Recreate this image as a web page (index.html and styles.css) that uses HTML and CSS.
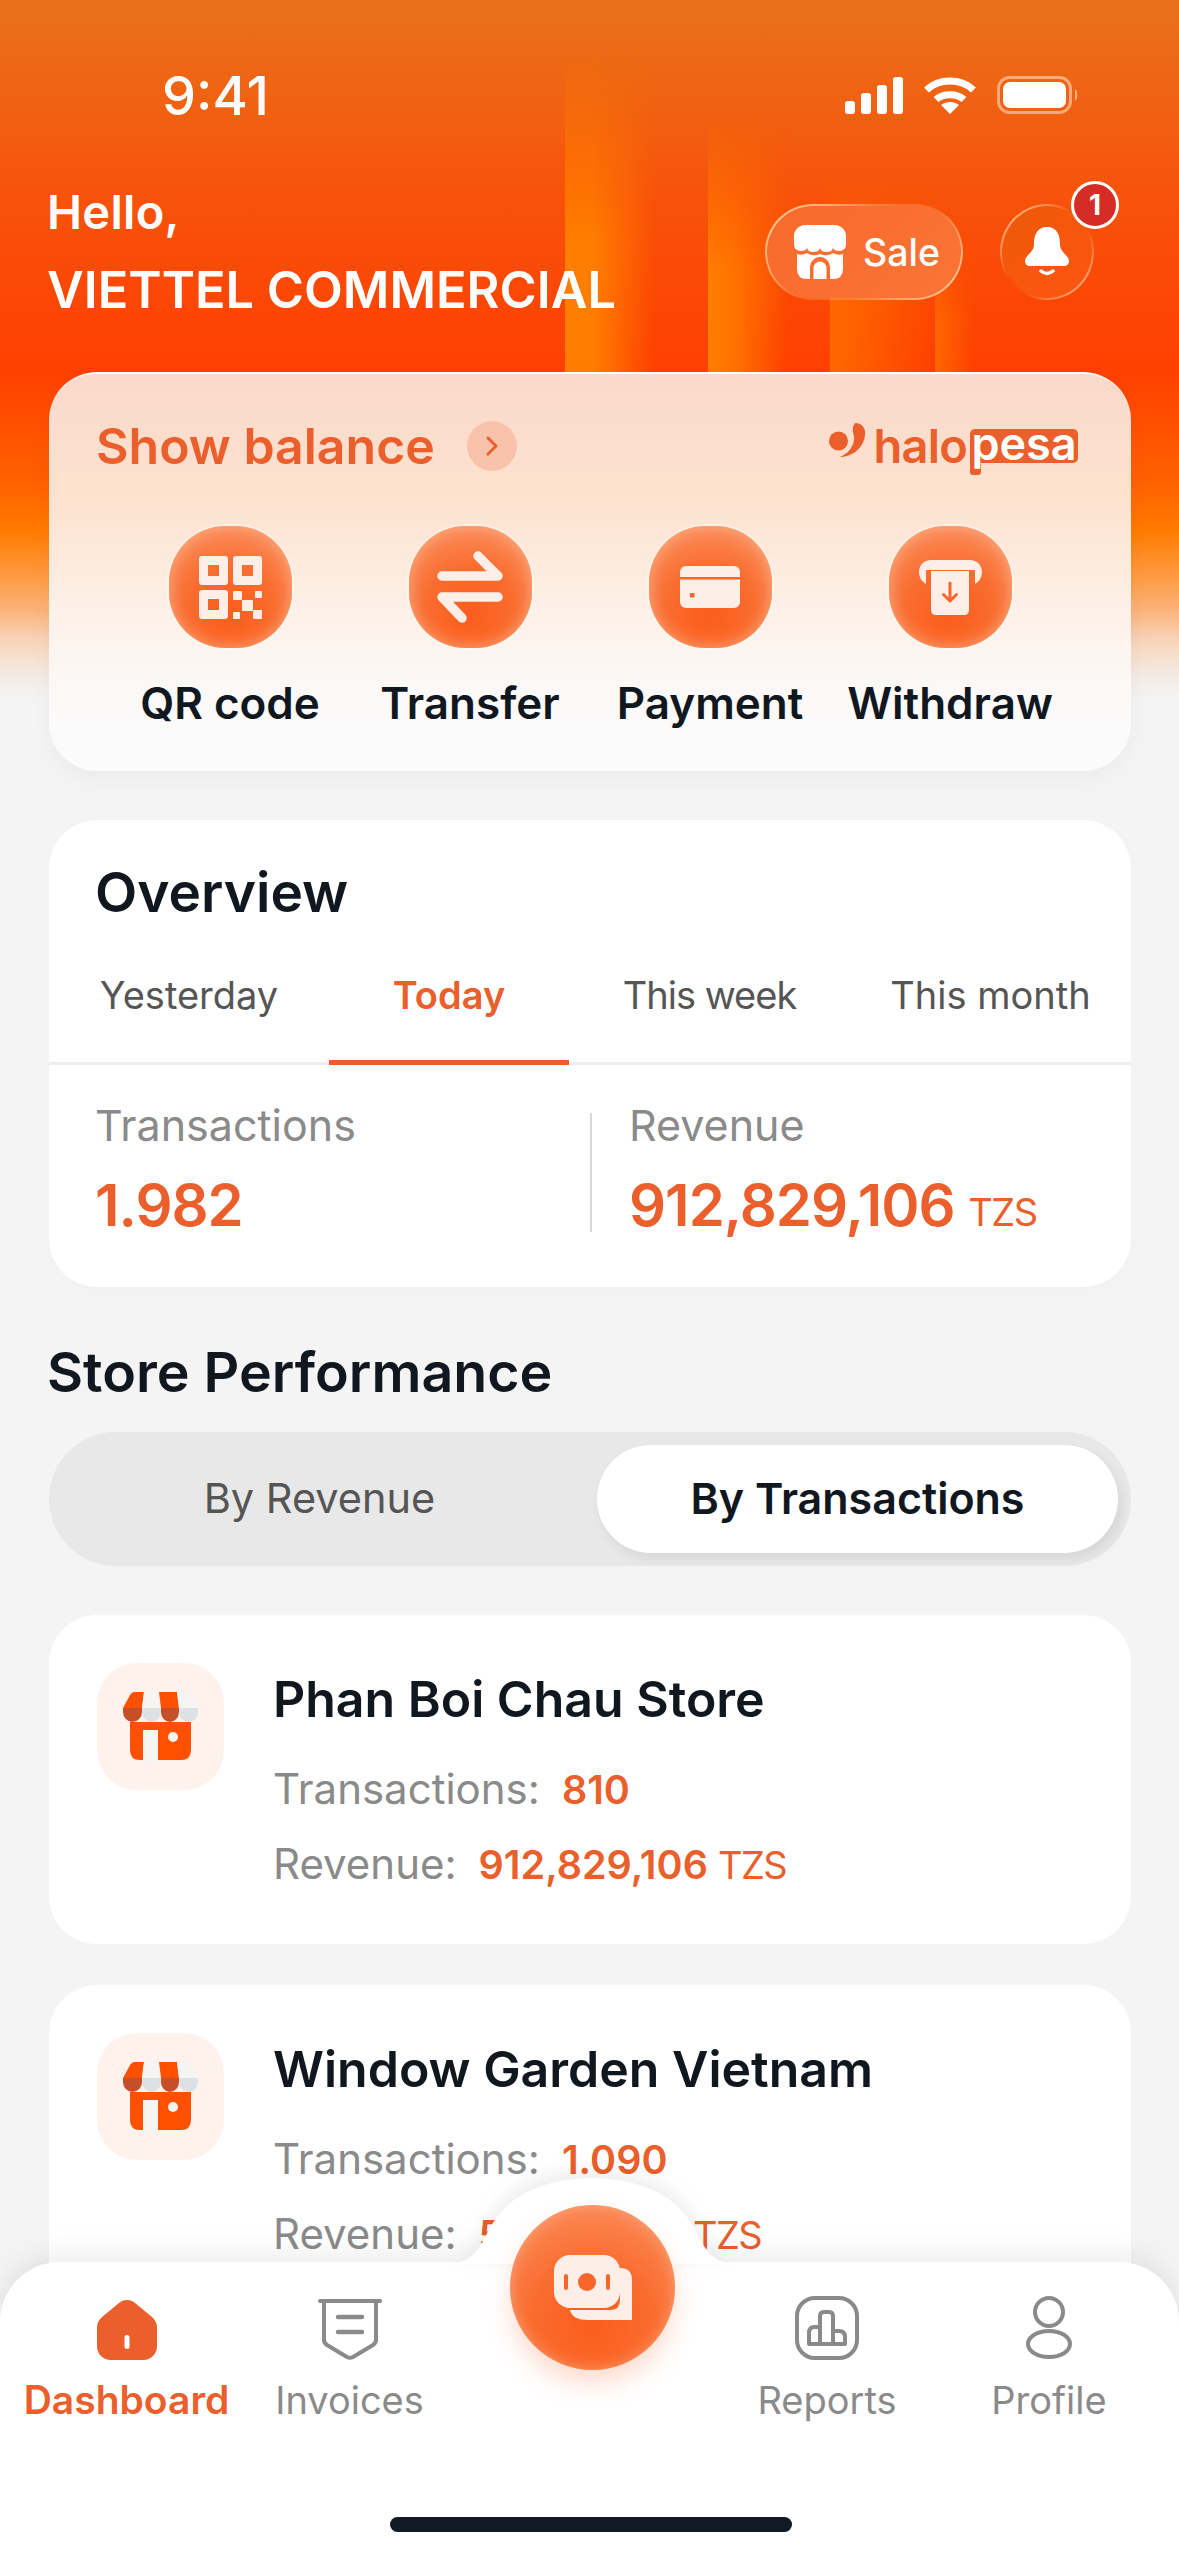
FILE: index.html
```html
<!DOCTYPE html>
<html lang="en">
<head>
    <meta charset="UTF-8">
    <meta name="viewport" content="width=device-width, initial-scale=1.0">
    <title>Dashboard</title>
    <link rel="stylesheet" href="styles.css">
</head>
<body>
    <div id="screen">
        <!-- orange backdrop behind the header -->
        <div class="backdrop">
            <div class="stripe stripeA"></div>
            <div class="stripe stripeB"></div>
            <div class="stripe stripeC"></div>
            <div class="stripe stripeD"></div>
        </div>

        <div class="content">
            <div class="statusBar">
                <span class="clock">9:41</span>
                <div class="statusIcons">
                    <svg width="58" height="37" viewBox="0 0 58 37" fill="#fff">
                        <rect x="0" y="24" width="10" height="13" rx="3"/>
                        <rect x="16" y="16" width="10" height="21" rx="3"/>
                        <rect x="32" y="8" width="10" height="29" rx="3"/>
                        <rect x="48" y="0" width="10" height="37" rx="3"/>
                    </svg>
                    <svg width="52" height="37" viewBox="0 0 52 37" fill="none" stroke="#fff" stroke-width="7">
                        <path d="M2.5 13C15 1 37 1 49.500 13"/>
                        <path d="M12 22.500C19 16 33 16 40 22.500"/>
                        <path d="M26 37L17 28C22 24 30 24 35 28Z" fill="#fff" stroke="none"/>
                    </svg>
                    <svg width="82" height="38" viewBox="0 0 82 38" fill="none">
                        <rect x="1.500" y="1.500" width="72" height="35" rx="11" stroke="#fff" stroke-opacity=".45" stroke-width="3"/>
                        <rect x="6" y="6" width="63" height="26" rx="7" fill="#fff"/>
                        <path d="M78 13C81 15 81 23 78 25Z" fill="#fff" fill-opacity=".5"/>
                    </svg>
                </div>
            </div>

            <div class="greetingRow">
                <div>
                    <div class="hello">Hello,</div>
                    <div class="merchant">VIETTEL COMMERCIAL</div>
                </div>
                <div class="headerActions">
                    <div class="salePill">
                        <svg width="52" height="54" viewBox="0 0 52 54" fill="#fff">
                            <path d="M11 0H41C47 0 52 5 52 11V19Q52 26 45 26Q39 26 39 22Q39 27 32.500 27Q26 27 26 22Q26 27 19.500 27Q13 27 13 22Q13 26 7 26Q0 26 0 19V11C0 5 5 0 11 0Z"/>
                            <path d="M3 29Q8 31 13 28Q19 32 26 29Q33 32 39 28Q44 31 49 29V44Q49 54 39 54H36V42A10 10 0 0 0 16 42V54H13Q3 54 3 44Z"/>
                            <path d="M19.500 54V43A6.500 6.500 0 0 1 32.500 43V54Z"/>
                        </svg>
                        <span>Sale</span>
                    </div>
                    <div class="bellButton">
                        <svg width="44" height="50" viewBox="0 0 44 50">
                            <path fill="#fff" d="M22 0C32 0 35 8 35 17C35 26 44 28 44 34C44 37 42 39 39 39H5C2 39 0 37 0 34C0 28 9 26 9 17C9 8 12 0 22 0Z"/>
                            <path fill="none" stroke="#fff" stroke-width="3.500" stroke-linecap="round" d="M16 44Q22 49 28 44"/>
                        </svg>
                        <span class="badge">1</span>
                    </div>
                </div>
            </div>

            <div class="card balanceCard">
                <div class="balanceTop">
                    <div class="showBalance">
                        <span>Show balance</span>
                        <div class="chevron">
                            <svg width="14" height="22" viewBox="0 0 14 22" fill="none" stroke="#ea5f2b" stroke-width="3" stroke-linecap="round" stroke-linejoin="round"><path d="M3 3L11 11L3 19"/></svg>
                        </div>
                    </div>
                    <div class="logo">
                        <svg width="37" height="35" viewBox="0 0 37 35" fill="#ea5f2b">
                            <circle cx="9.500" cy="18" r="9.500"/>
                            <path d="M26 0C33 0 37 5 36 12C35 24 24 34 11 34C18 31 24 25 25 17C26 11 21 7 26 0Z"/>
                        </svg>
                        <span class="logoHalo">halo</span>
                        <span class="logoPesa">pesa</span>
                    </div>
                </div>
                <div class="quickActions">
                    <div class="quickAction">
                        <div class="blob">
                            <svg width="63" height="63" viewBox="0 0 63 63" fill="#fdeee7">
                                <path fill-rule="evenodd" d="M3 0H26A3 3 0 0 1 29 3V26A3 3 0 0 1 26 29H3A3 3 0 0 1 0 26V3A3 3 0 0 1 3 0ZM9 9V20H20V9Z"/>
                                <path fill-rule="evenodd" d="M37 0H60A3 3 0 0 1 63 3V26A3 3 0 0 1 60 29H37A3 3 0 0 1 34 26V3A3 3 0 0 1 37 0ZM43 9V20H54V9Z"/>
                                <path fill-rule="evenodd" d="M3 34H26A3 3 0 0 1 29 37V60A3 3 0 0 1 26 63H3A3 3 0 0 1 0 60V37A3 3 0 0 1 3 34ZM9 43V54H20V43Z"/>
                                <rect x="34" y="35" width="9" height="9" rx="1"/>
                                <rect x="56" y="35" width="7" height="7" rx="1"/>
                                <rect x="43" y="44" width="11" height="11" rx="1"/>
                                <rect x="34" y="56" width="7" height="7" rx="1"/>
                                <rect x="54" y="54" width="9" height="9" rx="1"/>
                            </svg>
                        </div>
                        <div class="quickLabel">QR code</div>
                    </div>
                    <div class="quickAction">
                        <div class="blob">
                            <svg width="66" height="72" viewBox="0 0 66 72" fill="none" stroke="#fdeee7" stroke-width="9.500" stroke-linecap="round" stroke-linejoin="round">
                                <path d="M5 25H61L41 5"/>
                                <path d="M61 46H5L25 67"/>
                            </svg>
                        </div>
                        <div class="quickLabel">Transfer</div>
                    </div>
                    <div class="quickAction">
                        <div class="blob">
                            <svg width="60" height="42" viewBox="0 0 60 42">
                                <rect width="60" height="42" rx="6" fill="#fdeee7"/>
                                <rect y="11" width="60" height="2.500" fill="#f9662a"/>
                                <rect x="10" y="27" width="4.500" height="4.500" fill="#f9662a"/>
                            </svg>
                        </div>
                        <div class="quickLabel">Payment</div>
                    </div>
                    <div class="quickAction">
                        <div class="blob">
                            <svg width="63" height="55" viewBox="0 0 63 55">
                                <path fill="#fdeee7" d="M12 0H51C58 0 63 5 63 12C63 17 60 22 56 24V10H7V24C3 22 0 17 0 12C0 5 5 0 12 0Z"/>
                                <path fill="#fdeee7" d="M12 11H50V50Q50 55 45 55H17Q12 55 12 50Z"/>
                                <path fill="none" stroke="#f9662a" stroke-width="3" stroke-linecap="round" stroke-linejoin="round" d="M31 23V41M24.500 34.500L31 41L37.500 34.500"/>
                            </svg>
                        </div>
                        <div class="quickLabel">Withdraw</div>
                    </div>
                </div>
            </div>

            <div class="card overviewCard">
                <div class="overviewTitle">Overview</div>
                <div class="tabs">
                    <div class="tab">Yesterday</div>
                    <div class="tab tabActive">Today</div>
                    <div class="tab tabWeek">This week</div>
                    <div class="tab">This month</div>
                </div>
                <div class="stats">
                    <div class="stat statLeft">
                        <div class="statLabel">Transactions</div>
                        <div class="statValue">1.982</div>
                    </div>
                    <div class="statDivider"></div>
                    <div class="stat statRight">
                        <div class="statLabel">Revenue</div>
                        <div class="statValue">912,829,106 <span class="unit">TZS</span></div>
                    </div>
                </div>
            </div>

            <div class="sectionTitle">Store Performance</div>
            <div class="segment">
                <div class="segOption">By Revenue</div>
                <div class="segOption segActive">By Transactions</div>
            </div>

            <div class="card storeCard">
                <div class="storeIcon">
                    <svg width="75" height="70" viewBox="0 0 75 70">
                        <use href="#shopGlyph"/>
                    </svg>
                </div>
                <div class="storeInfo">
                    <div class="storeName">Phan Boi Chau Store</div>
                    <div class="storeLine firstLine"><span class="lineLabel">Transactions:</span><b>810</b></div>
                    <div class="storeLine"><span class="lineLabel">Revenue:</span><b>912,829,106</b><span class="lineUnit">TZS</span></div>
                </div>
            </div>

            <div class="card storeCard secondStore">
                <div class="storeIcon">
                    <svg width="75" height="70" viewBox="0 0 75 70">
                        <use href="#shopGlyph"/>
                    </svg>
                </div>
                <div class="storeInfo">
                    <div class="storeName">Window Garden Vietnam</div>
                    <div class="storeLine firstLine"><span class="lineLabel">Transactions:</span><b>1.090</b></div>
                    <div class="storeLine"><span class="lineLabel">Revenue:</span><b>51,829,106</b><span class="lineUnit">TZS</span></div>
                </div>
            </div>
        </div>

        <!-- bottom navigation, sits over the scrolling list -->
        <div class="bottomNav">
            <svg class="navBump" width="286" height="86" viewBox="0 0 286 86" fill="#fff">
                <path d="M0 86C22 84 27 74 33 65C37 57 42 47 48 39C58 26 70 17 83 12C100 4 122 0 143 0C164 0 186 4 203 12C216 17 228 26 238 39C244 47 249 57 253 65C259 74 264 84 286 86Z"/>
            </svg>
            <div class="scanButton">
                <svg width="78" height="65" viewBox="0 0 78 65">
                    <path fill="#fdeee7" d="M34 65Q18 65 16 55H56Q66 55 66 45V13Q78 13 78 25V65Z"/>
                    <rect x="0" y="0" width="66" height="53" rx="16" fill="#fdeee7"/>
                    <circle cx="33" cy="27" r="9" fill="#f9662a"/>
                    <rect x="10" y="19" width="4" height="16" rx="2" fill="#f9662a"/>
                    <rect x="52" y="19" width="4" height="16" rx="2" fill="#f9662a"/>
                </svg>
            </div>
            <div class="navItems">
                <div class="navItem navActive">
                    <svg width="60" height="60" viewBox="0 0 60 60">
                        <path fill="#ea5f2b" d="M22 3C26 -1 34 -1 38 3L55 17C58 20 60 23 60 27V46C60 54 54 60 46 60H14C6 60 0 54 0 46V27C0 23 2 20 5 17Z"/>
                        <rect x="27.500" y="35" width="5" height="14" rx="2.500" fill="#fff"/>
                    </svg>
                    <span>Dashboard</span>
                </div>
                <div class="navItem">
                    <svg width="64" height="62" viewBox="0 0 64 62" fill="none" stroke="#8a8a8a" stroke-width="4" stroke-linecap="round" stroke-linejoin="round">
                        <path d="M2 3H62"/>
                        <path d="M6 3V42Q6 45 9 47L29 59Q32 60.500 35 59L55 47Q58 45 58 42V3"/>
                        <path d="M20 19H44M20 34H44" stroke-width="4.500"/>
                    </svg>
                    <span>Invoices</span>
                </div>
                <div class="navGap"></div>
                <div class="navItem">
                    <svg width="64" height="64" viewBox="0 0 64 64" fill="none" stroke="#8a8a8a" stroke-width="4" stroke-linejoin="round">
                        <rect x="2" y="2" width="60" height="60" rx="18"/>
                        <path d="M14 48V37Q14 31 19.500 31H25V20Q25 16 29 16H34Q38 16 38 20V35H44Q50 35 50 41V48ZM25 31V48M38 35V48"/>
                    </svg>
                    <span>Reports</span>
                </div>
                <div class="navItem">
                    <svg width="46" height="64" viewBox="0 0 46 64" fill="none" stroke="#8a8a8a" stroke-width="4">
                        <circle cx="23" cy="16" r="14"/>
                        <ellipse cx="23" cy="48" rx="21" ry="13"/>
                    </svg>
                    <span>Profile</span>
                </div>
            </div>
            <div class="homeBar"></div>
        </div>

        <svg width="0" height="0" class="defs">
            <defs>
                <g id="shopGlyph">
                    <path fill="#ff5000" d="M7 30H68V58Q68 68 58 68H17Q7 68 7 58Z"/>
                    <rect x="20" y="38" width="15" height="32" fill="#f5f5f3"/>
                    <circle cx="50" cy="45" r="5" fill="#f7f3ef"/>
                    <path fill="#ff5000" d="M12 0H21L19 16H0L6 5Q8 0 12 0Z"/>
                    <path fill="#f6f5f3" d="M21 0H36L38 16H19Z"/>
                    <path fill="#ff5000" d="M36 0H54L56 16H38Z"/>
                    <path fill="#f6f5f3" d="M54 0H64Q67 0 69 4L75 16H56Z"/>
                    <path fill="#c54f28" d="M0 16H19V20A9.500 10 0 0 1 0 20Z"/>
                    <path fill="#dde1e3" d="M19 16H38V20A9.500 10 0 0 1 19 20Z"/>
                    <path fill="#c54f28" d="M38 16H56V20A9 10 0 0 1 38 20Z"/>
                    <path fill="#dde1e3" d="M56 16H75V20A9.500 10 0 0 1 56 20Z"/>
                </g>
            </defs>
        </svg>
    </div>
</body>
</html>
```

FILE: styles.css
```css
* {
    box-sizing: border-box;
}
body {
    margin: 0;
    font-family: Inter, "Noto Sans", sans-serif;
}
#screen {
    position: relative;
    width: 1179px;
    height: 2556px;
    overflow: hidden;
    background-color: #f4f4f4;
}
.backdrop {
    position: absolute;
    top: 0;
    left: 0;
    right: 0;
    height: 700px;
    background: linear-gradient(to bottom, #e8721a 0, #f8520a 200px, #ff4000 370px, #ff6000 480px, #ff7a00 530px, #fd9a40 575px, #fbb27a 610px, #f8d3ba 640px, #f4e8df 670px, #f4f4f4 700px);
}
.stripe {
    position: absolute;
    bottom: 328px;
    -webkit-mask-image: linear-gradient(to bottom, transparent, #000 60%);
    mask-image: linear-gradient(to bottom, transparent, #000 60%);
}
.stripeA {
    left: 565px;
    width: 90px;
    height: 322px;
    background: linear-gradient(to right, #ff7e00 0, #ff7e00 30%, rgba(255, 110, 0, 0));
}
.stripeB {
    left: 708px;
    width: 80px;
    height: 255px;
    background: linear-gradient(to right, #ff7e00 0, #ff7400 30%, rgba(255, 110, 0, 0));
}
.stripeC {
    left: 830px;
    width: 105px;
    height: 190px;
    background: linear-gradient(to right, #ff6a00, rgba(255, 106, 0, 0));
}
.stripeD {
    left: 935px;
    width: 40px;
    height: 130px;
    background: linear-gradient(to right, #ff6600, rgba(255, 102, 0, 0));
}
.content {
    position: relative;
}
.statusBar {
    display: flex;
    justify-content: space-between;
    align-items: center;
    height: 50px;
    padding: 0 100px 0 162px;
    position: relative;
    top: 70px;
}
.clock {
    color: #fff;
    font-size: 54px;
    font-weight: 500;
}
.statusIcons {
    display: flex;
    align-items: center;
    gap: 21px;
}
.greetingRow {
    display: flex;
    justify-content: space-between;
    height: 125px;
    margin-top: 140px;
    padding: 0 85px 0 47px;
    color: #fff;
}
.hello {
    font-size: 47px;
    font-weight: 600;
    line-height: 44px;
    letter-spacing: 0.3px;
}
.merchant {
    margin-top: 31px;
    font-size: 50.500px;
    font-weight: 600;
    line-height: 50px;
}
.headerActions {
    display: flex;
    gap: 37px;
    margin-top: 14px;
}
.salePill {
    display: flex;
    align-items: center;
    gap: 17px;
    width: 198px;
    height: 96px;
    padding-left: 27px;
    border: 2px solid transparent;
    border-radius: 48px;
    background: linear-gradient(135deg, #f76a2c, #fb7437) padding-box, linear-gradient(135deg, rgba(255, 225, 180, 0.95), rgba(255, 200, 150, 0.25) 45%, rgba(255, 200, 150, 0.25) 60%, rgba(255, 225, 180, 0.95)) border-box;
    font-size: 37.500px;
    font-weight: 500;
}
.bellButton {
    position: relative;
    display: flex;
    align-items: center;
    justify-content: center;
    width: 94px;
    height: 96px;
    border: 2px solid transparent;
    border-radius: 50%;
    background: linear-gradient(135deg, #ec5a08, #ff5510) padding-box, linear-gradient(135deg, rgba(255, 225, 180, 0.95), rgba(255, 120, 60, 0.1) 42%, rgba(255, 120, 60, 0.1) 60%, rgba(255, 225, 180, 0.9)) border-box;
}
.badge {
    position: absolute;
    top: -25px;
    right: -27px;
    width: 48px;
    height: 48px;
    border-radius: 50%;
    border: 3px solid #fff;
    background-color: #d52d25;
    color: #fff;
    font-size: 28px;
    font-weight: 700;
    line-height: 42px;
    text-align: center;
}
.card {
    margin: 0 48px 0 49px;
    border-radius: 48px;
    background-color: #fff;
}
.balanceCard {
    height: 399px;
    margin-top: 57px;
    padding: 46px 53px 0 47px;
    border-top: 2px solid rgba(255, 255, 255, 0.6);
    background: linear-gradient(to bottom, #fbd9cb 0, #fde3d0 130px, #fdf2ea 250px, #fbf9f8 320px, #fcfcfc 100%);
    box-shadow: 0 8px 24px rgba(0, 0, 0, 0.04);
}
.balanceTop {
    display: flex;
    justify-content: space-between;
    align-items: center;
    height: 52px;
}
.showBalance {
    display: flex;
    align-items: center;
    gap: 32px;
    color: #ea5f2b;
    font-size: 50px;
    font-weight: 600;
}
.chevron {
    display: flex;
    align-items: center;
    justify-content: center;
    width: 50px;
    height: 50px;
    border-radius: 50%;
    background-color: #f9c3ab;
}
.logo {
    display: flex;
    align-items: flex-start;
}
.logoHalo {
    margin-left: 8px;
    color: #ea5f2b;
    font-size: 47px;
    font-weight: 600;
    line-height: 46px;
    letter-spacing: -0.8px;
}
.logoPesa {
    position: relative;
    isolation: isolate;
    width: 108px;
    height: 34px;
    margin-left: 3px;
    margin-top: 6px;
    border-radius: 5px;
    background-color: #ea5f2b;
    color: #fff;
    font-size: 45px;
    font-weight: 600;
    line-height: 30px;
    text-align: center;
}
.logoPesa::before {
    content: "";
    position: absolute;
    top: 30px;
    left: 0;
    width: 11px;
    height: 16px;
    border-radius: 0 0 3px 3px;
    background-color: #ea5f2b;
    z-index: -1;
}
.quickActions {
    display: grid;
    grid-template-columns: repeat(4, 240px);
    margin: 54px 0 0 14px;
}
.quickAction {
    display: flex;
    flex-direction: column;
    align-items: center;
}
.blob {
    display: flex;
    align-items: center;
    justify-content: center;
    width: 123px;
    height: 122px;
    border-radius: 46%;
    background: radial-gradient(circle at 50% 72%, #fb5d1c 0, #f96c2f 42%, #fb8a58 82%, #fc9a6e 100%);
    box-shadow: inset 0 0 16px rgba(255, 200, 165, 0.65), 0 0 0 2px rgba(255, 255, 255, 0.35);
}
.quickLabel {
    margin-top: 30px;
    color: #10171f;
    font-size: 44px;
    font-weight: 600;
    line-height: 50px;
    white-space: nowrap;
}
.overviewCard {
    height: 467px;
    margin-top: 49px;
    padding-top: 48px;
    box-shadow: 0 4px 16px rgba(0, 0, 0, 0.015);
}
.overviewTitle {
    padding-left: 46px;
    color: #10171f;
    font-size: 55px;
    font-weight: 600;
    line-height: 48px;
}
.tabs {
    display: grid;
    grid-template-columns: 280px 240px 281px 281px;
    margin-top: 24px;
    border-bottom: 3px solid #eeeeee;
}
.tab {
    height: 125px;
    margin-bottom: -3px;
    padding-top: 30px;
    color: #555555;
    font-size: 38px;
    line-height: 50px;
    text-align: center;
}
.tabWeek {
    letter-spacing: -1px;
}
.tabActive {
    border-bottom: 5px solid #ea5f2b;
    color: #ea5f2b;
    font-weight: 600;
}
.stats {
    display: grid;
    grid-template-columns: 541px 2px 1fr;
    padding-top: 36px;
}
.statLeft {
    padding-left: 46px;
}
.statRight {
    padding-left: 37px;
}
.statDivider {
    align-self: center;
    height: 119px;
    background-color: #d8d8d8;
}
.statLabel {
    color: #8a8a8a;
    font-size: 43px;
    line-height: 48px;
}
.statValue {
    margin-top: 24px;
    color: #ea5f2b;
    font-size: 58px;
    font-weight: 600;
    line-height: 64px;
    letter-spacing: -1px;
    white-space: nowrap;
}
.unit {
    font-size: 38px;
    font-weight: 400;
    letter-spacing: -1.500px;
}
.sectionTitle {
    margin: 55px 0 0 47px;
    color: #10171f;
    font-size: 55.500px;
    font-weight: 600;
    line-height: 60px;
}
.segment {
    display: grid;
    grid-template-columns: 1fr 521px;
    height: 134px;
    margin: 30px 48px 0 49px;
    padding: 13px;
    border-radius: 67px;
    background-color: #e8e8e8;
}
.segOption {
    display: flex;
    align-items: center;
    justify-content: center;
    padding: 0 20px 3px 0;
    color: #555555;
    font-size: 41.500px;
}
.segActive {
    padding-right: 0;
    border-radius: 54px;
    background-color: #fff;
    box-shadow: 4px 6px 12px rgba(0, 0, 0, 0.08);
    color: #10171f;
    font-size: 43px;
    font-weight: 600;
}
.storeCard {
    display: flex;
    gap: 49px;
    height: 329px;
    margin-top: 49px;
    padding: 48px;
}
.secondStore {
    margin-top: 41px;
}
.storeIcon {
    display: flex;
    align-items: center;
    justify-content: center;
    flex-shrink: 0;
    width: 127px;
    height: 127px;
    border-radius: 40px;
    background-color: #fef2ec;
}
.storeInfo {
    margin-top: 8px;
}
.storeName {
    color: #10171f;
    font-size: 50px;
    font-weight: 600;
    line-height: 56px;
}
.storeLine {
    display: flex;
    align-items: baseline;
    margin-top: 24px;
    color: #ea5f2b;
    font-size: 38px;
    line-height: 50px;
}
.firstLine {
    margin-top: 37px;
}
.lineLabel {
    margin-right: 22px;
    color: #8a8a8a;
    font-size: 42px;
}
.storeLine b {
    font-size: 39.500px;
    font-weight: 600;
}
.lineUnit {
    margin-left: 10px;
    letter-spacing: -1.500px;
}
.bottomNav {
    position: absolute;
    left: 0;
    right: 0;
    bottom: 0;
    height: 294px;
    border-radius: 60px 60px 0 0;
    background-color: #fff;
    box-shadow: 0 -8px 30px rgba(0, 0, 0, 0.08);
}
.navBump {
    position: absolute;
    top: -84px;
    left: 449px;
    filter: drop-shadow(0 -6px 10px rgba(0, 0, 0, 0.08));
}
.scanButton {
    position: absolute;
    top: -57px;
    left: 510px;
    display: flex;
    align-items: center;
    justify-content: center;
    width: 165px;
    height: 165px;
    border-radius: 50%;
    background: radial-gradient(circle at 50% 72%, #fb5d1c 0, #f96c2f 42%, #fb8a58 85%, #fc9a6e 100%);
    box-shadow: inset 0 0 14px rgba(255, 200, 165, 0.5), 0 14px 24px rgba(249, 102, 42, 0.22);
}
.navItems {
    position: relative;
    display: grid;
    grid-template-columns: 223px 223px 255px 222px 222px;
    padding: 34px 19px 0 15px;
}
.navItem {
    display: flex;
    flex-direction: column;
    align-items: center;
    justify-content: flex-end;
    gap: 18px;
    height: 126px;
    color: #8a8a8a;
    font-size: 38px;
    line-height: 44px;
}
.navActive {
    color: #ea5f2b;
    font-size: 39px;
    font-weight: 600;
}
.homeBar {
    position: absolute;
    left: 390px;
    bottom: 24px;
    width: 402px;
    height: 15px;
    border-radius: 8px;
    background-color: #121a26;
}
.defs {
    position: absolute;
}
```
